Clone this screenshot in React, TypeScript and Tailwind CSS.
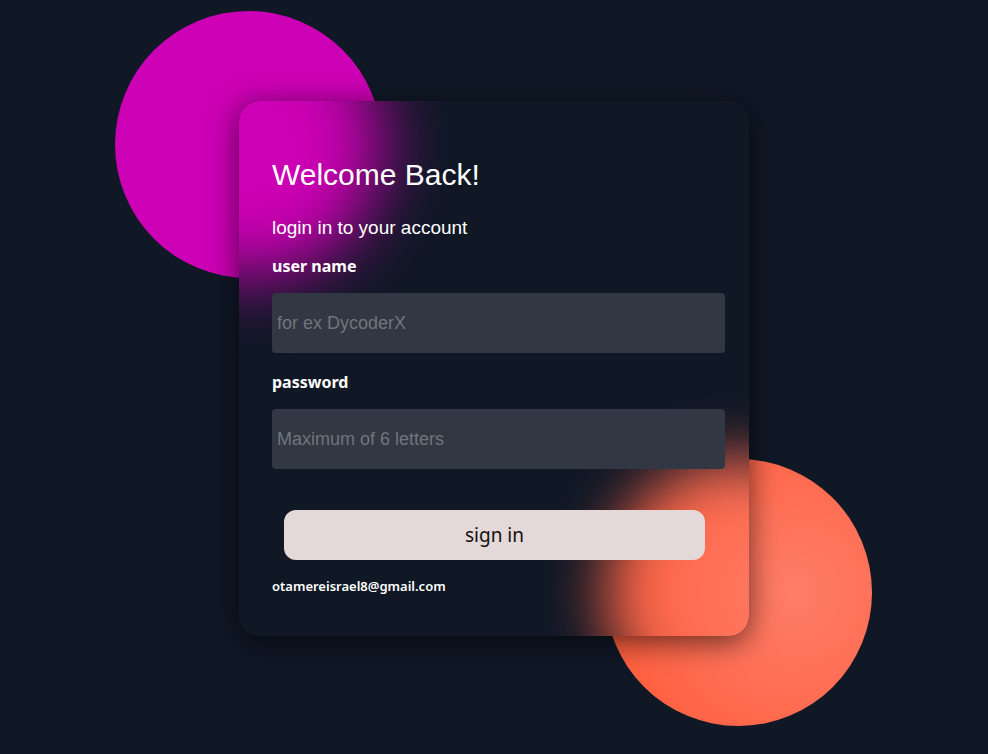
import React from "react";

const arial = { fontFamily: '"Liberation Sans", Arial, sans-serif' };

function Field({ label, placeholder, type, gapTop }: { label: string; placeholder: string; type: string; gapTop: string }) {
  return (
    <div className={`flex flex-col gap-[16px] ${gapTop}`}>
      <label className="text-[16px] leading-[22px] font-bold">{label}</label>
      <input
        type={type}
        placeholder={placeholder}
        className="w-[453px] h-[60px] rounded-[4px] bg-[#313843] pl-[5px] text-[18px] text-white placeholder:text-[#70757c] outline-none"
        style={arial}
      />
    </div>
  );
}

export default function App() {
  return (
    <div className="relative w-full min-h-screen h-[754px] overflow-hidden bg-[#101826] flex justify-center pt-[101px]">
      <div className="absolute left-[115px] top-[11px] w-[267px] h-[267px] rounded-full bg-[#cc00b4]" />
      <div className="absolute left-[605px] top-[459px] w-[267px] h-[267px] rounded-full bg-[radial-gradient(circle_at_70%_50%,#ff7d66_0%,#ff7259_35%,#ff5733_100%)]" />

      {/* glass card: blurred copies of the circles stand in for backdrop-filter */}
      <div className="relative z-10 w-[510px] h-[535px] rounded-[20px] overflow-hidden bg-[#101826] shadow-[0_6px_30px_rgba(0,0,0,0.6)] text-white font-['Noto_Sans',sans-serif]">
        <div className="absolute inset-0 pointer-events-none">
          <div className="absolute left-[-124px] top-[-90px] w-[267px] h-[267px] rounded-full bg-[#cc00b4] blur-[34px]" />
          <div className="absolute left-[366px] top-[358px] w-[267px] h-[267px] rounded-full bg-[radial-gradient(circle_at_70%_50%,#ff7d66_0%,#ff7259_35%,#ff5733_100%)] blur-[30px]" />
        </div>

        <form className="relative flex flex-col items-start pl-[33px] pt-[56px]" onSubmit={(e) => e.preventDefault()}>
          <h1 className="text-[30px] leading-[36px] font-normal" style={arial}>
            Welcome Back!
          </h1>
          <p className="mt-[24px] text-[19px] leading-[22px]" style={arial}>
            login in to your account
          </p>

          <Field label="user name" placeholder="for ex DycoderX" type="text" gapTop="mt-[16px]" />
          <Field label="password" placeholder="Maximum of 6 letters" type="password" gapTop="mt-[18px]" />

          <button className="mt-[41px] ml-[12px] w-[421px] h-[50px] rounded-[12px] bg-[#e4d8d8] text-[#111] text-[19px]">
            sign in
          </button>

          <p className="mt-[17px] text-[13px] leading-[18px] font-semibold">otamereisrael8@gmail.com</p>
        </form>
      </div>
    </div>
  );
}
